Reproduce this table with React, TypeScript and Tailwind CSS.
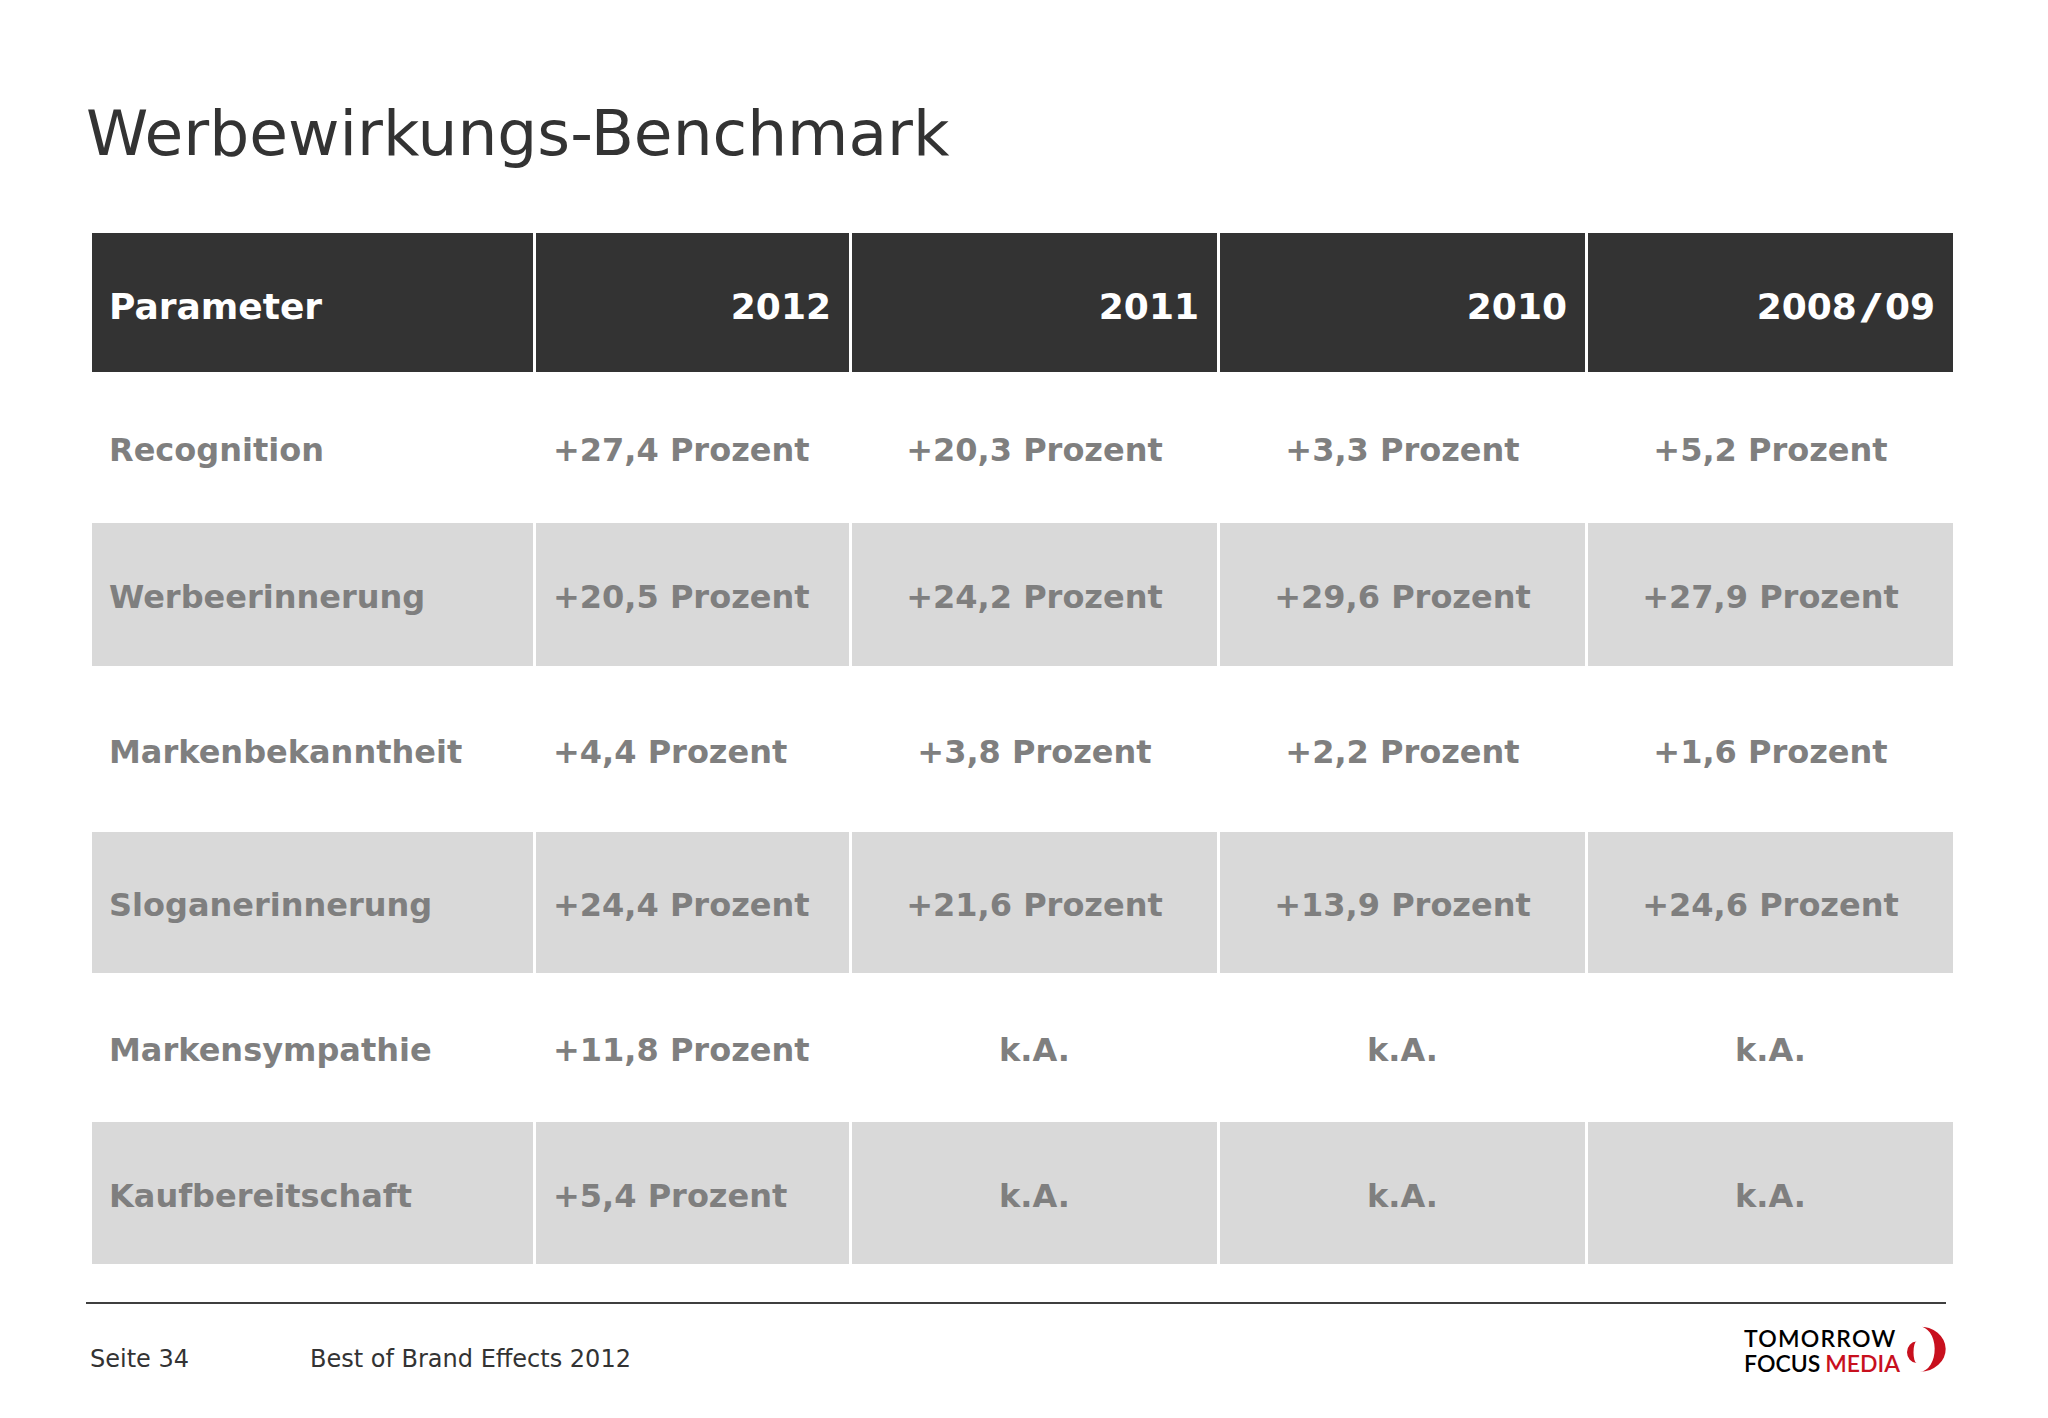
import React from "react"

const font = "font-['DejaVu_Sans',Verdana,sans-serif]"

const rows = [
  {
    label: "Recognition",
    values: ["+27,4 Prozent", "+20,3 Prozent", "+3,3 Prozent", "+5,2 Prozent"],
    shaded: false,
    height: "h-[151px]",
  },
  {
    label: "Werbeerinnerung",
    values: ["+20,5 Prozent", "+24,2 Prozent", "+29,6 Prozent", "+27,9 Prozent"],
    shaded: true,
    height: "h-[143px]",
  },
  {
    label: "Markenbekanntheit",
    values: ["+4,4 Prozent", "+3,8 Prozent", "+2,2 Prozent", "+1,6 Prozent"],
    shaded: false,
    height: "h-[166px]",
  },
  {
    label: "Sloganerinnerung",
    values: ["+24,4 Prozent", "+21,6 Prozent", "+13,9 Prozent", "+24,6 Prozent"],
    shaded: true,
    height: "h-[141px]",
  },
  {
    label: "Markensympathie",
    values: ["+11,8 Prozent", "k.A.", "k.A.", "k.A."],
    shaded: false,
    height: "h-[149px]",
  },
  {
    label: "Kaufbereitschaft",
    values: ["+5,4 Prozent", "k.A.", "k.A.", "k.A."],
    shaded: true,
    height: "h-[142px]",
  },
]

const cols = "grid grid-cols-[441px_313px_365px_365px_365px] gap-x-[3px]"

function LogoMark() {
  return (
    <svg width="48" height="48" viewBox="0 0 48 48" className="ml-[2px]">
      {/* left small crescent */}
      <path d="M14.5 16.5 A9.5 10.75 0 0 0 14.5 38 A3 10.75 0 0 1 14.5 16.5 Z" fill="#c8101e" />
      {/* right large crescent */}
      <path d="M17 1.5 A26 22.5 0 0 1 18 46.8 A15 22.4 0 0 0 17 1.5 Z" fill="#c8101e" />
    </svg>
  )
}

export default function App() {
  return (
    <div className={`w-[2048px] h-[1418px] bg-white ${font} overflow-hidden`}>
      {/* Title */}
      <h1 className="mt-[102px] ml-[86px] h-[63px] text-[63px] leading-none font-normal text-[#333333]">
        Werbewirkungs-Benchmark
      </h1>

      {/* Table */}
      <div className="mt-[68px] ml-[92px] w-[1861px]">
        <div className={`${cols} h-[139px]`}>
          <div className="bg-[#333333] flex items-center pl-[17px] pt-[8px] text-white font-bold text-[36px]">
            Parameter
          </div>
          {["2012", "2011", "2010"].map((y) => (
            <div
              key={y}
              className="bg-[#333333] flex items-center justify-end pr-[18px] pt-[8px] text-white font-bold text-[36px]"
            >
              {y}
            </div>
          ))}
          <div className="bg-[#333333] flex items-center justify-end pr-[18px] pt-[8px] text-white font-bold text-[36px]">
            2008<span className="inline-block w-[28px] text-center scale-x-[1.6]">/</span>09
          </div>
        </div>

        {rows.map((row) => (
          <div key={row.label} className={`${cols} ${row.height}`}>
            <div
              className={`flex items-center pl-[17px] pt-[5px] text-[32px] font-bold text-[#7f7f7f] ${
                row.shaded ? "bg-[#d9d9d9]" : "bg-white"
              }`}
            >
              {row.label}
            </div>
            {row.values.map((v, i) => (
              <div
                key={i}
                className={`flex items-center pt-[5px] text-[32px] font-bold text-[#7f7f7f] ${
                  i === 0 ? "pl-[17px]" : "justify-center"
                } ${row.shaded ? "bg-[#d9d9d9]" : "bg-white"}`}
              >
                {v}
              </div>
            ))}
          </div>
        ))}
      </div>

      {/* Footer rule */}
      <div className="mt-[38px] ml-[86px] w-[1860px] h-[2px] bg-[#3f3f3f]" />

      {/* Footer */}
      <div className="mt-[21px] ml-[90px] w-[1860px] flex items-start justify-between">
        <div className="flex pt-[22px] text-[24px] leading-none text-[#333333]">
          <span className="w-[220px]">Seite 34</span>
          <span>Best of Brand Effects 2012</span>
        </div>
        <div className="flex items-start">
          <div className="font-['Lato','Open_Sans',sans-serif] font-semibold text-[23px] leading-[25px] text-black pt-[1px]">
            <div className="tracking-[1.2px]">TOMORROW</div>
            <div>
              FOCUS<span className="ml-[5px] text-[#c8101e]">MEDIA</span>
            </div>
          </div>
          <LogoMark />
        </div>
      </div>
    </div>
  )
}
